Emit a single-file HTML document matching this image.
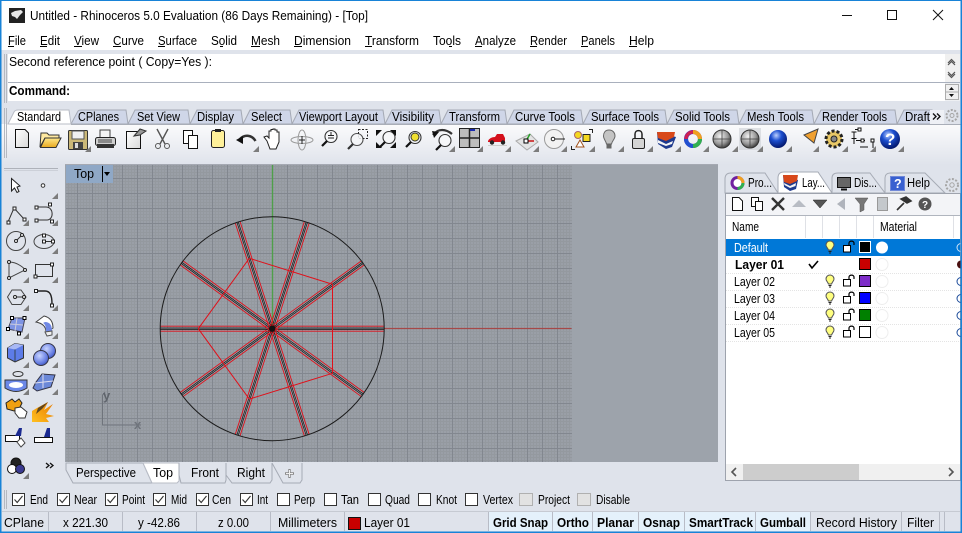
<!DOCTYPE html>
<html><head><meta charset="utf-8"><title>Rhinoceros</title>
<style>
html,body{margin:0;padding:0;background:#fff;width:962px;height:533px;overflow:hidden}
svg{display:block}
text{font-family:"Liberation Sans",sans-serif;font-size:12.5px;fill:#000;white-space:pre}
.b{font-weight:bold}
</style></head><body>
<svg width="962" height="533" viewBox="0 0 962 533" xmlns="http://www.w3.org/2000/svg">
<defs>
<pattern id="g" x="2" y="13" width="15" height="15" patternUnits="userSpaceOnUse">
<rect width="15" height="15" fill="#9a9fa7"/>
<path d="M3.500 0V15M6.500 0V15M9.500 0V15M12.500 0V15M0 3.500H15M0 6.500H15M0 9.500H15M0 12.500H15" stroke="#94999f" stroke-width="1" fill="none"/>
<path d="M.5 0V15M0 .5H15" stroke="#82878f" stroke-width="1" fill="none"/>
</pattern>
<linearGradient id="tb" x1="0" y1="0" x2="0" y2="1"><stop offset="0" stop-color="#fbfbfc"/><stop offset="1" stop-color="#dfe3eb"/></linearGradient>
<linearGradient id="doc" x1="0" y1="0" x2="1" y2="1"><stop offset="0" stop-color="#fff"/><stop offset="1" stop-color="#d8d8d8"/></linearGradient>
<linearGradient id="fold" x1="0" y1="0" x2="0" y2="1"><stop offset="0" stop-color="#ffe88a"/><stop offset="1" stop-color="#e8a81e"/></linearGradient>
<linearGradient id="exp" x1="1" y1="0" x2="0" y2="1"><stop offset="0" stop-color="#e87a00"/><stop offset="1" stop-color="#ffc020"/></linearGradient>
<radialGradient id="sph" cx=".4" cy=".35" r=".7"><stop offset="0" stop-color="#f2f2f2"/><stop offset=".6" stop-color="#999"/><stop offset="1" stop-color="#333"/></radialGradient>
<radialGradient id="blu" cx=".4" cy=".3" r=".75"><stop offset="0" stop-color="#bcd0ff"/><stop offset=".4" stop-color="#1c4fd0"/><stop offset="1" stop-color="#001060"/></radialGradient>
<radialGradient id="lb" cx=".4" cy=".35" r=".75"><stop offset="0" stop-color="#c8d4ff"/><stop offset=".7" stop-color="#6078e0"/><stop offset="1" stop-color="#33449c"/></radialGradient>
<g id="s"><path d="M0 -2.500H112M0 2.500H112" stroke="#e0101a" stroke-width=".9" fill="none"/><path d="M0 -.7H112M0 .7H112" stroke="#151515" stroke-width=".7" fill="none"/></g>
<path id="t" d="M6 0V6H0Z" fill="#7c7c7c"/>
<g id="bulb"><path d="M5 1C2.500 1 1 3 1 5C1 7 3 8 3.400 10H6.600C7 8 9 7 9 5C9 3 7.500 1 5 1Z" fill="#ffff80" stroke="#555" stroke-width="1"/><path d="M3.500 11.500H6.500M4 13H6" stroke="#222" stroke-width="1"/></g>
<g id="lock"><rect x=".5" y="5.500" width="7" height="6.500" fill="#fff" stroke="#000"/><path d="M6 5.500V3C6 .5 11 .5 11 3V5" fill="none" stroke="#000" stroke-width="1.200"/></g>
<g id="ck"><rect x=".5" y=".5" width="12" height="12" fill="#fff" stroke="#333"/><path d="M2.500 6.500L5.200 9.500L10.500 3" fill="none" stroke="#333" stroke-width="1.100"/></g>
<g id="uck"><rect x=".5" y=".5" width="12" height="12" fill="#fff" stroke="#333"/></g>
<g id="mag"><circle cx="9" cy="6.500" r="6" fill="#f6f7f9" stroke="#333" stroke-width="1.100"/><path d="M5 11L0 16" stroke="#111" stroke-width="2.200"/></g>
</defs>

<rect width="962" height="533" fill="#dfe3eb"/>
<!-- title & menu -->
<rect x="0" y="0" width="962" height="50" fill="#fff"/>
<rect x="9" y="8" width="16" height="15" fill="#222"/>
<path d="M11 13L15 11L21 10L23 12L20 15L17 19L15 17L12 16Z" fill="#e8e8e8"/>
<text x="30" y="20" textLength="338" lengthAdjust="spacingAndGlyphs">Untitled - Rhinoceros 5.0 Evaluation (86 Days Remaining) - [Top]</text>
<path d="M842 15.500H852" stroke="#111"/><rect x="887.500" y="10.500" width="9" height="9" fill="none" stroke="#111"/><path d="M933 10L943 20M943 10L933 20" stroke="#111" fill="none"/>
<text x="8" y="45" textLength="18" lengthAdjust="spacingAndGlyphs">File</text>
<text x="40" y="45" textLength="20" lengthAdjust="spacingAndGlyphs">Edit</text>
<text x="74" y="45" textLength="25" lengthAdjust="spacingAndGlyphs">View</text>
<text x="113" y="45" textLength="31" lengthAdjust="spacingAndGlyphs">Curve</text>
<text x="158" y="45" textLength="39" lengthAdjust="spacingAndGlyphs">Surface</text>
<text x="211" y="45" textLength="26" lengthAdjust="spacingAndGlyphs">Solid</text>
<text x="251" y="45" textLength="29" lengthAdjust="spacingAndGlyphs">Mesh</text>
<text x="294" y="45" textLength="57" lengthAdjust="spacingAndGlyphs">Dimension</text>
<text x="365" y="45" textLength="54" lengthAdjust="spacingAndGlyphs">Transform</text>
<text x="433" y="45" textLength="28" lengthAdjust="spacingAndGlyphs">Tools</text>
<text x="475" y="45" textLength="41" lengthAdjust="spacingAndGlyphs">Analyze</text>
<text x="530" y="45" textLength="37" lengthAdjust="spacingAndGlyphs">Render</text>
<text x="581" y="45" textLength="34" lengthAdjust="spacingAndGlyphs">Panels</text>
<text x="629" y="45" textLength="25" lengthAdjust="spacingAndGlyphs">Help</text>
<path d="M8 46.500H14M40 46.500H47M74 46.500H82M113 46.500H121M158 46.500H165M220 46.500H223M251 46.500H260M294 46.500H302M365 46.500H372M449 46.500H452M475 46.500H482M530 46.500H537M581 46.500H588M629 46.500H637" stroke="#000" fill="none"/>

<!-- command -->
<rect x="4" y="54" width="1" height="49" fill="#b4b8c0"/><rect x="6" y="54" width="1" height="49" fill="#b4b8c0"/>
<rect x="8" y="54" width="937" height="28" fill="#fff"/>
<rect x="8" y="83" width="937" height="18" fill="#fff"/>
<rect x="8" y="82" width="952" height="1" fill="#a9b0bd"/>
<rect x="945" y="54" width="15" height="28" fill="#f0f0f0"/>
<rect x="945" y="83" width="15" height="18" fill="#eef0f3"/>
<text x="9" y="66" textLength="203" lengthAdjust="spacingAndGlyphs">Second reference point ( Copy=Yes ):</text>
<text x="9" y="95" class="b" textLength="61" lengthAdjust="spacingAndGlyphs">Command:</text>
<path d="M948 63L951.500 59.500L955 63M948 65L951.500 61.500L955 65" fill="none" stroke="#555" stroke-width="1.200"/>
<path d="M948 72L951.500 75.500L955 72M948 74L951.500 77.500L955 74" fill="none" stroke="#555" stroke-width="1.200"/>
<rect x="945.500" y="84.500" width="13" height="15" fill="#f0f0f0" stroke="#adadad"/><path d="M946 92H958" stroke="#adadad"/>
<path d="M949 90L951.500 87L954 90Z M949 94L954 94L951.500 97Z" fill="#111"/>

<!-- toolbar -->
<rect x="0" y="124" width="962" height="41" fill="url(#tb)"/>
<rect x="4" y="108" width="1" height="50" fill="#b4b8c0"/><rect x="6" y="108" width="1" height="50" fill="#b4b8c0"/>
<path d="M71 124L78 111Q79 110 81 110H126L128 124ZM128 124L135 110H188L190 124ZM190 124L197 110H241L243 124ZM243 124L250 110H290L292 124ZM292 124L299 110H383L385 124ZM385 124L392 110H439L441 124ZM441 124L448 110H505L507 124ZM507 124L514 110H581L583 124ZM583 124L590 110H665L667 124ZM667 124L674 110H737L739 124ZM739 124L746 110H812L814 124ZM814 124L821 110H895L897 124ZM897 124L904 110H932V124Z" fill="#cfd6e8" stroke="#a4a9b4" stroke-width="1"/>
<path d="M8 124L14 112Q15 110 18 110H69L71 124Z" fill="#fff" stroke="#b8bcc6"/>
<path d="M71 124.500H962" stroke="#a9aeb8"/>
<text x="17" y="121" textLength="44" lengthAdjust="spacingAndGlyphs">Standard</text>
<text x="78" y="121" textLength="41" lengthAdjust="spacingAndGlyphs">CPlanes</text>
<text x="137" y="121" textLength="43" lengthAdjust="spacingAndGlyphs">Set View</text>
<text x="197" y="121" textLength="37" lengthAdjust="spacingAndGlyphs">Display</text>
<text x="251" y="121" textLength="31" lengthAdjust="spacingAndGlyphs">Select</text>
<text x="299" y="121" textLength="79" lengthAdjust="spacingAndGlyphs">Viewport Layout</text>
<text x="392" y="121" textLength="42" lengthAdjust="spacingAndGlyphs">Visibility</text>
<text x="449" y="121" textLength="51" lengthAdjust="spacingAndGlyphs">Transform</text>
<text x="515" y="121" textLength="60" lengthAdjust="spacingAndGlyphs">Curve Tools</text>
<text x="591" y="121" textLength="68" lengthAdjust="spacingAndGlyphs">Surface Tools</text>
<text x="675" y="121" textLength="55" lengthAdjust="spacingAndGlyphs">Solid Tools</text>
<text x="747" y="121" textLength="57" lengthAdjust="spacingAndGlyphs">Mesh Tools</text>
<text x="822" y="121" textLength="65" lengthAdjust="spacingAndGlyphs">Render Tools</text>
<text x="905" y="121" textLength="25" lengthAdjust="spacingAndGlyphs">Draft</text>
<rect x="930" y="110" width="14" height="14" fill="#eef0f5"/>
<path d="M933 113.500L936 116.500L933 119.500M937 113.500L940 116.500L937 119.500" fill="none" stroke="#111" stroke-width="1.400"/>
<circle cx="952" cy="115.500" r="5.500" fill="none" stroke="#a6a6a6" stroke-width="2" stroke-dasharray="2 1.500"/><circle cx="952" cy="115.500" r="2" fill="none" stroke="#a6a6a6"/>

<!-- toolbar icons -->
<path d="M15.500 129.500H25L28.500 133V147.500H15.500Z" fill="url(#doc)" stroke="#111"/>
<path d="M40 147L41 133H47L49 135H59V138H45Z" fill="#ffe9a0" stroke="#333"/><path d="M40.500 147.500L45 138H61L56 147.500Z" fill="url(#fold)" stroke="#333"/>
<rect x="68.500" y="130.500" width="19" height="19" rx="1" fill="#cbb878" stroke="#333"/><rect x="72" y="131" width="12" height="8" fill="#f0f0f0" stroke="#555"/><rect x="73" y="142" width="10" height="7" fill="#444"/><rect x="75" y="143" width="3" height="5" fill="#ddd"/>
<path d="M100 130H110V138H100Z" fill="#f4f4f4" stroke="#444"/><rect x="95.500" y="137.500" width="20" height="8" rx="2" fill="#d0d0d0" stroke="#222"/><rect x="97" y="144" width="17" height="4" fill="#333"/><path d="M98 140H112M98 142H112" stroke="#444"/>
<path d="M126.500 131.500H137L140.500 135V148.500H126.500Z" fill="url(#doc)" stroke="#111"/><path d="M134 136L140 129L146 131L140 135Z" fill="#999" stroke="#333"/>
<path d="M157 129L165 144M168 129L160 144" stroke="#555" stroke-width="1.400"/><circle cx="158" cy="146" r="2.500" fill="none" stroke="#555"/><circle cx="167" cy="146" r="2.500" fill="none" stroke="#555"/>
<rect x="183.500" y="130.500" width="9" height="13" fill="#fff" stroke="#111"/><rect x="188.500" y="135.500" width="9" height="13" fill="#fff" stroke="#111"/>
<rect x="211.500" y="130.500" width="13" height="17" rx="2" fill="#fff19a" stroke="#222"/><rect x="215" y="129" width="6" height="3" fill="#222"/>
<path d="M240 139C245 134 252 135 255.500 141" fill="none" stroke="#333" stroke-width="2.500"/><path d="M236 140L243 136V144Z" fill="#111"/>
<path d="M267 141L264 137L267 136L269 138V131H271V129.500H273V129H275V130H277V132H279V142L276 149H270Z" fill="#fff" stroke="#222"/>
<ellipse cx="302" cy="140" rx="11" ry="3.500" fill="none" stroke="#9a9a9a"/><ellipse cx="302" cy="140" rx="4" ry="10" fill="none" stroke="#9a9a9a"/><path d="M302 136V144M299 140H305" stroke="#222"/>
<use href="#mag" x="322" y="130"/><path d="M328 135.500H334M331 132V135M328 138H334" stroke="#222"/>
<rect x="358.500" y="129.500" width="9" height="9" fill="none" stroke="#222" stroke-dasharray="2 1.500"/><use href="#mag" x="348" y="133" opacity=".85"/>
<use href="#mag" x="380" y="131"/><path d="M376 130H382L376 136ZM396 130H390L396 136ZM376 148H382L376 142ZM396 148H390L396 142Z" fill="#111"/>
<use href="#mag" x="406" y="131"/><circle cx="415" cy="137" r="4" fill="#f0e030" stroke="#333"/>
<path d="M433 135C438 128 446 129 452 134" fill="none" stroke="#333" stroke-width="2.200"/><path d="M432 131L439 132L434 138Z" fill="#111"/><use href="#mag" x="436" y="134"/>
<rect x="459.500" y="128.500" width="20" height="19" fill="#bdbdbd" stroke="#222"/><path d="M469.500 129V148M460 138H479" stroke="#222" stroke-width="1.500"/><rect x="470" y="129" width="5" height="2" fill="#1a2ab0"/>
<path d="M488 141Q490 137 495 137L497 134H503L505 138V142H488Z" fill="#d4101c"/><circle cx="492" cy="142.500" r="2.200" fill="#222"/><circle cx="503" cy="142.500" r="2.200" fill="#222"/><path d="M488 145.500H507" stroke="#ccc"/>
<path d="M516 141L530 134L538 142L527 150Z" fill="#e4e4e4" stroke="#aaa"/><path d="M526 141H534" stroke="#c81414" stroke-width="1.500"/><path d="M526 141L530 134" stroke="#28a028" stroke-width="1.500"/><rect x="524" y="139" width="4" height="4" fill="#fff" stroke="#000"/>
<circle cx="554" cy="139" r="9.500" fill="#f2f2f2" stroke="#9a9a9a"/><circle cx="553" cy="139" r="1.800" fill="#fff" stroke="#222"/><path d="M555 139H565" stroke="#222"/>
<circle cx="578" cy="135" r="3.500" fill="#f4d820" stroke="#a66"/><rect x="583" y="134.500" width="7" height="7" fill="#f4d820" stroke="#222"/><path d="M580 140L576 147H584Z" fill="#fff" stroke="#a0521c"/><path d="M589 129.500H592.500V133M571.500 146V149.500H575" fill="none" stroke="#222"/>
<path d="M609 130C605 130 603.500 133 603.500 136C603.500 139 606 141 606.500 144H611.500C612 141 615 139 615 136C615 133 613 130 609 130Z" fill="#c4c4c4" stroke="#666"/><rect x="606.500" y="144.500" width="5" height="4" fill="#666"/>
<rect x="632.500" y="138.500" width="12" height="10" rx="1.500" fill="#d4d4d4" stroke="#222"/><path d="M635 138V134C635 129.500 642 129.500 642 134V138" fill="none" stroke="#222" stroke-width="1.500"/>
<path d="M657 132L676 137L672 147L666 149L658 144Z" fill="#1e3a8e"/><path d="M657 132L675 132L674 137L666 141L658 138Z" fill="#d8481a"/><path d="M658 140L666 144L673 141L672 144L666 146L658 143Z" fill="#f4f4f4"/>
<circle cx="693" cy="139" r="7" fill="none" stroke="#7020a0" stroke-width="4"/><path d="M693 132A7 7 0 0 1 700 139" fill="none" stroke="#f0a020" stroke-width="4"/><path d="M700 139A7 7 0 0 1 693 146" fill="none" stroke="#30b050" stroke-width="4"/><path d="M693 146A7 7 0 0 1 686 139" fill="none" stroke="#2050d0" stroke-width="4"/><path d="M686 139A7 7 0 0 1 693 132" fill="none" stroke="#d02050" stroke-width="3"/>
<circle cx="722" cy="139" r="9" fill="url(#sph)" stroke="#333"/><path d="M722 130V148M713 139H731" stroke="#444" stroke-width=".8"/>
<rect x="739" y="128" width="22" height="22" fill="#cdd0d6" opacity=".6"/><circle cx="750" cy="139" r="9" fill="url(#sph)" stroke="#333"/><path d="M750 130V148M741 139H759" stroke="#444" stroke-width=".8"/>
<circle cx="778" cy="139" r="9" fill="url(#blu)"/>
<path d="M804 135L818 129L814 143Z" fill="#f0a030" stroke="#444"/>
<circle cx="834" cy="139" r="8" fill="#e0c060" stroke="#222" stroke-width="3" stroke-dasharray="3 2"/><circle cx="834" cy="139" r="6" fill="#e8c868"/><circle cx="834" cy="139" r="3" fill="#888" stroke="#222"/>
<path d="M854 132V144M851.500 132H856.500M851.500 138.500H856.500M855 129.500H860M856 140.500H865M860 147H868M873 140V148" fill="none" stroke="#111"/><rect x="858" y="128" width="3" height="3" fill="#fff" stroke="#111"/><rect x="861" y="139" width="3" height="3" fill="#fff" stroke="#111"/><rect x="871" y="139" width="3" height="3" fill="#fff" stroke="#111"/>
<circle cx="890" cy="139" r="10" fill="url(#blu)"/><text x="885" y="145" class="b" style="font-size:17px;fill:#fff">?</text>
<use href="#t" x="85" y="146"/><use href="#t" x="253" y="146"/><use href="#t" x="449" y="146"/><use href="#t" x="477" y="146"/><use href="#t" x="505" y="146"/><use href="#t" x="533" y="146"/><use href="#t" x="561" y="146"/><use href="#t" x="589" y="146"/><use href="#t" x="618" y="146"/><use href="#t" x="647" y="146"/><use href="#t" x="675" y="146"/><use href="#t" x="703" y="146"/><use href="#t" x="732" y="146"/><use href="#t" x="757" y="146"/><use href="#t" x="786" y="146"/><use href="#t" x="813" y="146"/><use href="#t" x="842" y="146"/><use href="#t" x="870" y="146"/><use href="#t" x="898" y="146"/>

<!-- viewport -->
<rect x="65" y="164" width="653" height="298" fill="#9da3ab"/>
<rect x="65" y="164" width="653" height="1" fill="#a5a9b2"/>
<rect x="66" y="165" width="506" height="297" fill="url(#g)"/>
<rect x="66" y="165" width="47" height="18" fill="#8fa8c6"/>
<text x="74" y="178" style="font-size:13px" textLength="20" lengthAdjust="spacingAndGlyphs">Top</text>
<path d="M102.500 166V182" stroke="#000"/><path d="M104 172H110L107 176Z" fill="#000"/>
<path d="M272.500 165V328" stroke="#4f9f4a" stroke-width="1.400"/>
<path d="M384 328.500H571.500" stroke="#a54848" stroke-width="1.300"/>
<path d="M102.500 395V425H141M102.500 395L105 392" stroke="#6f747c" fill="none"/>
<text x="103" y="400" style="font-size:13px;fill:#5f646c" class="b">y</text>
<text x="134" y="429" style="font-size:13px;fill:#6f747c" class="b">x</text>
<g transform="translate(272.200 328.700)">
<use href="#s"/><use href="#s" transform="rotate(36)"/><use href="#s" transform="rotate(72)"/><use href="#s" transform="rotate(108)"/><use href="#s" transform="rotate(144)"/><use href="#s" transform="rotate(180)"/><use href="#s" transform="rotate(216)"/><use href="#s" transform="rotate(252)"/><use href="#s" transform="rotate(288)"/><use href="#s" transform="rotate(324)"/>
<circle r="3.200" fill="#111"/>
</g>
<path d="M198.300 328.700L249.300 258.300L332.500 284.300V373.300L249.300 399.100Z" fill="none" stroke="#e0101a" stroke-width="1"/>
<circle cx="272.200" cy="328.700" r="112" fill="none" stroke="#1a1a1a" stroke-width="1"/>

<!-- left toolbar -->
<path d="M4 168.500H58" stroke="#aeb2ba"/><path d="M4 170.500H58" stroke="#c6cad2" stroke-width=".8"/>
<path d="M11.500 178.500V191L14.500 188L17 192.500L19 191.500L17 187L20 186Z" fill="#fff" stroke="#222"/>
<circle cx="43" cy="185.500" r="1.800" fill="#fff" stroke="#333"/>
<path d="M8 222L14 208L24 219" fill="none" stroke="#333"/><rect x="7" y="221" width="3" height="3" fill="#fff" stroke="#222"/><rect x="13" y="207" width="3" height="3" fill="#fff" stroke="#222"/><rect x="23" y="218" width="3" height="3" fill="#fff" stroke="#222"/>
<path d="M37 207H46C54 207 54 220 47 220H37" fill="none" stroke="#333"/><rect x="35" y="206" width="3" height="3" fill="#fff" stroke="#222"/><rect x="48.500" y="203" width="3" height="3" fill="#fff" stroke="#222"/><rect x="35" y="219" width="3" height="3" fill="#fff" stroke="#222"/><rect x="50.500" y="220" width="3" height="3" fill="#fff" stroke="#222"/>
<circle cx="16" cy="241" r="9.500" fill="none" stroke="#444"/><path d="M16 241L22 235" stroke="#333"/><circle cx="16" cy="241" r="1.500" fill="#fff" stroke="#222"/><circle cx="22" cy="235" r="1.500" fill="#fff" stroke="#222"/>
<ellipse cx="44" cy="241.500" rx="10" ry="7" fill="none" stroke="#444"/><path d="M44 241.500H53" stroke="#333"/><rect x="42.500" y="234" width="3" height="3" fill="#fff" stroke="#222"/><rect x="42.500" y="240" width="3" height="3" fill="#fff" stroke="#222"/><rect x="51.500" y="240" width="3" height="3" fill="#fff" stroke="#222"/>
<path d="M9 262C18 262 25 269 25 270L9 278Z" fill="none" stroke="#444"/><circle cx="9" cy="262" r="1.500" fill="#fff" stroke="#222"/><circle cx="25" cy="270" r="1.500" fill="#fff" stroke="#222"/><circle cx="9" cy="278" r="1.500" fill="#fff" stroke="#222"/>
<rect x="35.500" y="264.500" width="17" height="12" fill="none" stroke="#333"/><rect x="50.500" y="263" width="3" height="3" fill="#fff" stroke="#222"/><rect x="34" y="275" width="3" height="3" fill="#fff" stroke="#222"/>
<path d="M7.500 297L12 290H21L26 297L21 304.500H12Z" fill="none" stroke="#444"/><path d="M15 297H24" stroke="#333"/><circle cx="15" cy="297" r="1.500" fill="#fff" stroke="#222"/><circle cx="24" cy="297" r="1.500" fill="#fff" stroke="#222"/>
<path d="M37 291H45C50 291 52 295 52 304" fill="none" stroke="#222" stroke-width="1.400"/><rect x="34.500" y="289.500" width="3" height="3" fill="#fff" stroke="#222"/><rect x="50.500" y="304" width="3" height="3" fill="#fff" stroke="#222"/>
<path d="M12 318H25L22 332L8 329Z" fill="#7e94e4" stroke="#445"/><path d="M17 318L15 331M10 324L23 325" stroke="#ccd"/><rect x="10.500" y="316.500" width="3" height="3" fill="#fff" stroke="#000"/><rect x="23" y="316.500" width="3" height="3" fill="#fff" stroke="#000"/><rect x="6.500" y="327.500" width="3" height="3" fill="#fff" stroke="#000"/><rect x="17.500" y="332" width="3" height="3" fill="#fff" stroke="#000"/>
<path d="M36 322L44 316Q53 318 53 328L46 332Q46 324 36 322Z" fill="#fff" stroke="#444"/><path d="M45 322Q52 322 52 331L46 332Q46 324 43 323Z" fill="#7088e4"/><path d="M45 332L52 331V335L47 336Z" fill="#f0f0f0" stroke="#555"/>
<path d="M7.500 348L15 343.500L23.500 345V358L15 362L7.500 358Z" fill="#5d7ce8" stroke="#333"/><path d="M7.500 348L15 349.500L23.500 345L15 343.500Z" fill="#a8b8f4"/><path d="M15 349.500V362" stroke="#345"/>
<circle cx="48" cy="351" r="7.500" fill="url(#lb)" stroke="#334"/><circle cx="41" cy="358" r="7.500" fill="url(#lb)" stroke="#334"/>
<ellipse cx="18" cy="374" rx="5" ry="2.500" fill="none" stroke="#333"/><path d="M5 380H27V388Q16 395 5 388Z" fill="#6b88e8" stroke="#333"/><ellipse cx="16" cy="385" rx="7" ry="3" fill="#fff"/>
<path d="M36 382L42 374L55 375L51 387L37 391L33 388Z" fill="#6b88d8" stroke="#334"/><path d="M43 374L43 388M35 383L53 381" stroke="#dde"/>
<path d="M6 403L12 399L15 402L19 399L22 403L20 407L14 411L7 409Z" fill="#f0a010" stroke="#222"/><path d="M15 408L21 407L27 412L25 418H19L15 413Z" fill="#fff" stroke="#333"/>
<path d="M32 422V411L37 408L48 402L44 410L53 404L46 414L54 416L46 418L49 422Z" fill="url(#exp)"/><path d="M38 408L48 402L42 409L36 414Z" fill="#222" opacity=".7"/>
<rect x="5.500" y="435.500" width="14" height="6" fill="#fff" stroke="#111"/><path d="M15 436L19 428H22L21 436Z" fill="#1a2a90"/><path d="M17 442L21 438L25 443L21 447Z" fill="#fff" stroke="#444"/>
<rect x="34.500" y="437.500" width="18" height="5" fill="#fff" stroke="#111"/><path d="M44 437L47 428H50V437Z" fill="#1a2a90"/>
<circle cx="16" cy="463" r="5" fill="#222" stroke="#111"/><circle cx="12" cy="469" r="4.500" fill="#fff" stroke="#111"/><circle cx="20" cy="469" r="4.500" fill="#3a3a90" stroke="#111"/>
<path d="M46 463L49 465.500L46 468M50 463L53 465.500L50 468" fill="none" stroke="#111" stroke-width="1.300"/>
<use href="#t" x="52" y="193"/><use href="#t" x="23" y="220"/><use href="#t" x="52" y="220"/><use href="#t" x="23" y="248"/><use href="#t" x="52" y="248"/><use href="#t" x="23" y="277"/><use href="#t" x="52" y="277"/><use href="#t" x="23" y="305"/><use href="#t" x="52" y="305"/><use href="#t" x="23" y="333"/><use href="#t" x="52" y="333"/><use href="#t" x="23" y="362"/><use href="#t" x="52" y="362"/><use href="#t" x="23" y="389"/><use href="#t" x="52" y="389"/><use href="#t" x="23" y="473"/>

<!-- viewport tabs -->
<path d="M66 463V470L73 483H152L143 463Z" fill="#dfe3eb" stroke="#a6abb5"/>
<path d="M143 463L152 483H177L179 481V463Z" fill="#fff" stroke="#b8bcc6"/>
<path d="M179 463V475L181 483H225L226 480V463" fill="#dfe3eb" stroke="#a6abb5"/>
<path d="M226 463V475L232 483H270L272 480V463" fill="#dfe3eb" stroke="#a6abb5"/>
<path d="M272 463L283 483H300L302 480V463" fill="#dfe3eb" stroke="#a6abb5"/>
<text x="76" y="477" textLength="60" lengthAdjust="spacingAndGlyphs">Perspective</text>
<text x="153" y="477" textLength="20" lengthAdjust="spacingAndGlyphs">Top</text>
<text x="191" y="477" textLength="28" lengthAdjust="spacingAndGlyphs">Front</text>
<text x="237" y="477" textLength="28" lengthAdjust="spacingAndGlyphs">Right</text>
<path d="M289.500 469V478M285 473.500H294" stroke="#888" stroke-width="2.400"/><path d="M289.500 470V477M286 473.500H293" stroke="#eee" stroke-width="1"/>

<!-- right panel -->
<path d="M885 193V178Q885 173 891 173H925L945 193Z" fill="#dfe3eb" stroke="#a6abb5"/>
<path d="M832 193V178Q832 173 838 173H870L885 193Z" fill="#dfe3eb" stroke="#a6abb5"/>
<path d="M725 193V179Q725 173 731 173H765L778 193Z" fill="#dfe3eb" stroke="#a6abb5"/>
<path d="M778 193V178Q778 172 784 172H818L832 193Z" fill="#fff" stroke="#a6abb5"/>
<circle cx="737.500" cy="183" r="5.500" fill="#fff" stroke="#7020a0" stroke-width="3"/><path d="M737.500 177.500A5.500 5.500 0 0 1 743 183" fill="none" stroke="#f0a020" stroke-width="3"/><path d="M743 183A5.500 5.500 0 0 1 737.500 188.500" fill="none" stroke="#30b050" stroke-width="3"/>
<path d="M783 175L798 180L796 189L790 191L784 187Z" fill="#1e3a8e"/><path d="M783 175H798L797 181L790 184L784 182Z" fill="#d8481a"/><path d="M784 183L790 186L796 183L795.500 186L790 188L784.500 185Z" fill="#f4f4f4"/>
<text x="748" y="187" textLength="24" lengthAdjust="spacingAndGlyphs">Pro...</text>
<text x="802" y="187" textLength="23" lengthAdjust="spacingAndGlyphs">Lay...</text>
<rect x="837.500" y="177.500" width="13" height="10" fill="#666" stroke="#111"/><path d="M841 189.500H847" stroke="#111" stroke-width="2"/>
<text x="854" y="187" textLength="23" lengthAdjust="spacingAndGlyphs">Dis...</text>
<rect x="890.500" y="176.500" width="14" height="14" fill="#3860d0" stroke="#7088d8"/><text x="894" y="188" class="b" style="fill:#fff">?</text>
<text x="907" y="187" textLength="23" lengthAdjust="spacingAndGlyphs">Help</text>
<circle cx="952" cy="185" r="6" fill="none" stroke="#a6a6a6" stroke-width="2" stroke-dasharray="2 1.500"/><circle cx="952" cy="185" r="2.200" fill="none" stroke="#a6a6a6"/>
<rect x="725.500" y="193.500" width="235" height="287" fill="#fff" stroke="#9ea3ad"/>
<rect x="726" y="194" width="234" height="21" fill="#f3f4f7"/>
<path d="M726 215.500H960" stroke="#b0b5be"/>
<path d="M732.500 197.500H739L742.500 201V210.500H732.500Z" fill="#fff" stroke="#111"/>
<rect x="751.500" y="197.500" width="7" height="9" fill="#fff" stroke="#111"/><rect x="755.500" y="201.500" width="7" height="9" fill="#fff" stroke="#111"/>
<path d="M772 198L784 210M784 198L772 210" stroke="#333" stroke-width="2.400"/>
<path d="M792 207L799 200L806 207Z" fill="#b8bcc4"/>
<path d="M813 200H827L820 208Z" fill="#555" stroke="#222" stroke-width=".5"/>
<path d="M845 198V210L837 204Z" fill="#b0b4bc"/>
<path d="M855 198H868L864 204V210L860 212V204Z" fill="#777" stroke="#555" stroke-width=".5"/>
<rect x="877.500" y="197.500" width="10" height="13" fill="#c4c8cc" stroke="#999"/>
<path d="M897 210L904 203M901 199L907 203L911 201L906 197Z" fill="#333" stroke="#333" stroke-width="1.600"/>
<circle cx="925" cy="204" r="6.500" fill="#555"/><text x="922" y="208" class="b" style="font-size:10px;fill:#fff">?</text>
<path d="M805.500 216V238M822.500 216V238M839.500 216V238M856.500 216V238M873.500 216V238M953.500 216V238" stroke="#dfe1e6"/>
<text x="732" y="231" textLength="27" lengthAdjust="spacingAndGlyphs">Name</text>
<text x="880" y="231" textLength="37" lengthAdjust="spacingAndGlyphs">Material</text>
<rect x="726" y="239" width="234" height="17" fill="#0078d7"/>
<path d="M726 256.500H960" stroke="#fff" stroke-dasharray="1 1"/>
<path d="M726 273.500H960M726 290.500H960M726 307.500H960M726 324.500H960M726 341.500H960" stroke="#e4e4e4" stroke-dasharray="1 1"/>
<text x="734" y="252" style="fill:#fff" textLength="34" lengthAdjust="spacingAndGlyphs">Default</text>
<text x="735" y="269" class="b" textLength="49" lengthAdjust="spacingAndGlyphs">Layer 01</text>
<text x="734" y="286" textLength="41" lengthAdjust="spacingAndGlyphs">Layer 02</text>
<text x="734" y="303" textLength="41" lengthAdjust="spacingAndGlyphs">Layer 03</text>
<text x="734" y="320" textLength="41" lengthAdjust="spacingAndGlyphs">Layer 04</text>
<text x="734" y="337" textLength="41" lengthAdjust="spacingAndGlyphs">Layer 05</text>
<path d="M809 264L812 268L818 261" fill="none" stroke="#000" stroke-width="1.600"/>
<use href="#bulb" x="825" y="240"/><use href="#bulb" x="825" y="274"/><use href="#bulb" x="825" y="291"/><use href="#bulb" x="825" y="308"/><use href="#bulb" x="825" y="325"/>
<use href="#lock" x="843" y="240"/><use href="#lock" x="843" y="274"/><use href="#lock" x="843" y="291"/><use href="#lock" x="843" y="308"/><use href="#lock" x="843" y="325"/>
<rect x="859.500" y="241.500" width="11" height="11" fill="#000" stroke="#fff"/>
<rect x="859.500" y="258.500" width="11" height="11" fill="#c80000" stroke="#000"/>
<rect x="859.500" y="275.500" width="11" height="11" fill="#7d2cc8" stroke="#000"/>
<rect x="859.500" y="292.500" width="11" height="11" fill="#0000ff" stroke="#000"/>
<rect x="859.500" y="309.500" width="11" height="11" fill="#008000" stroke="#000"/>
<rect x="859.500" y="326.500" width="11" height="11" fill="#fff" stroke="#000"/>
<circle cx="882" cy="247.500" r="6" fill="#fff"/>
<g fill="none" stroke="#eeeeee"><circle cx="882" cy="264.500" r="6"/><circle cx="882" cy="281.500" r="6"/><circle cx="882" cy="298.500" r="6"/><circle cx="882" cy="315.500" r="6"/><circle cx="882" cy="332.500" r="6"/></g>
<g fill="none" stroke="#1a4a9a"><circle cx="961" cy="247.500" r="4" stroke="#cfe4f8"/><circle cx="961" cy="281.500" r="4"/><circle cx="961" cy="298.500" r="4"/><circle cx="961" cy="315.500" r="4"/><circle cx="961" cy="332.500" r="4"/></g>
<circle cx="961" cy="264.500" r="4" fill="#4a1010"/>
<rect x="726" y="464" width="234" height="16" fill="#f0f0f0"/>
<rect x="743" y="464" width="116" height="16" fill="#cdcdcd"/>
<path d="M736 468L732 472L736 476M949 468L953 472L949 476" fill="none" stroke="#555" stroke-width="1.600"/>

<!-- snap row -->
<rect x="4" y="490" width="1" height="19" fill="#b4b8c0"/><rect x="6" y="490" width="1" height="19" fill="#b4b8c0"/>
<use href="#ck" x="12" y="493"/><use href="#ck" x="57" y="493"/><use href="#ck" x="105" y="493"/><use href="#ck" x="153" y="493"/><use href="#ck" x="196" y="493"/><use href="#ck" x="240" y="493"/>
<use href="#uck" x="277" y="493"/><use href="#uck" x="324" y="493"/><use href="#uck" x="368" y="493"/><use href="#uck" x="418" y="493"/><use href="#uck" x="465" y="493"/>
<rect x="519.500" y="493.500" width="13" height="12" fill="#e2e2e2" stroke="#b0b0b0"/><rect x="577.500" y="493.500" width="13" height="12" fill="#e2e2e2" stroke="#b0b0b0"/>
<text x="30" y="504" textLength="18" lengthAdjust="spacingAndGlyphs">End</text>
<text x="74" y="504" textLength="23" lengthAdjust="spacingAndGlyphs">Near</text>
<text x="122" y="504" textLength="23" lengthAdjust="spacingAndGlyphs">Point</text>
<text x="171" y="504" textLength="16" lengthAdjust="spacingAndGlyphs">Mid</text>
<text x="212" y="504" textLength="19" lengthAdjust="spacingAndGlyphs">Cen</text>
<text x="257" y="504" textLength="11" lengthAdjust="spacingAndGlyphs">Int</text>
<text x="294" y="504" textLength="21" lengthAdjust="spacingAndGlyphs">Perp</text>
<text x="341" y="504" textLength="18" lengthAdjust="spacingAndGlyphs">Tan</text>
<text x="385" y="504" textLength="25" lengthAdjust="spacingAndGlyphs">Quad</text>
<text x="436" y="504" textLength="21" lengthAdjust="spacingAndGlyphs">Knot</text>
<text x="483" y="504" textLength="30" lengthAdjust="spacingAndGlyphs">Vertex</text>
<text x="538" y="504" textLength="32" lengthAdjust="spacingAndGlyphs">Project</text>
<text x="596" y="504" textLength="34" lengthAdjust="spacingAndGlyphs">Disable</text>

<!-- status bar -->
<path d="M2 511.500H960" stroke="#c6cad2"/>
<rect x="489" y="512" width="321" height="19" fill="#e4f1fb"/>
<path d="M48.500 512V531M122.500 512V531M196.500 512V531M270.500 512V531M344.500 512V531M488.500 512V531M552.500 512V531M592.500 512V531M638.500 512V531M684.500 512V531M755.500 512V531M810.500 512V531M901.500 512V531M939.500 512V531M944.500 512V531" stroke="#b8bcc6"/>
<text x="4" y="527" textLength="40" lengthAdjust="spacingAndGlyphs">CPlane</text>
<text x="63" y="527" textLength="45" lengthAdjust="spacingAndGlyphs">x 221.30</text>
<text x="138" y="527" textLength="42" lengthAdjust="spacingAndGlyphs">y -42.86</text>
<text x="218" y="527" textLength="31" lengthAdjust="spacingAndGlyphs">z 0.00</text>
<text x="278" y="527" textLength="59" lengthAdjust="spacingAndGlyphs">Millimeters</text>
<rect x="348.500" y="517.500" width="12" height="12" fill="#c80000" stroke="#111"/>
<text x="364" y="527" textLength="46" lengthAdjust="spacingAndGlyphs">Layer 01</text>
<text x="493" y="527" class="b" textLength="55" lengthAdjust="spacingAndGlyphs">Grid Snap</text>
<text x="557" y="527" class="b" textLength="32" lengthAdjust="spacingAndGlyphs">Ortho</text>
<text x="597" y="527" class="b" textLength="37" lengthAdjust="spacingAndGlyphs">Planar</text>
<text x="643" y="527" class="b" textLength="37" lengthAdjust="spacingAndGlyphs">Osnap</text>
<text x="689" y="527" class="b" textLength="64" lengthAdjust="spacingAndGlyphs">SmartTrack</text>
<text x="760" y="527" class="b" textLength="46" lengthAdjust="spacingAndGlyphs">Gumball</text>
<text x="816" y="527" textLength="81" lengthAdjust="spacingAndGlyphs">Record History</text>
<text x="907" y="527" textLength="27" lengthAdjust="spacingAndGlyphs">Filter</text>

<!-- window border -->
<rect x="0" y="0" width="962" height="1" fill="#1883d7"/>
<rect x="0" y="0" width="1.500" height="533" fill="#1883d7"/>
<rect x="960.500" y="0" width="1.500" height="533" fill="#1883d7"/>
<rect x="0" y="531.500" width="962" height="1.500" fill="#1883d7"/>
</svg>
</body></html>
